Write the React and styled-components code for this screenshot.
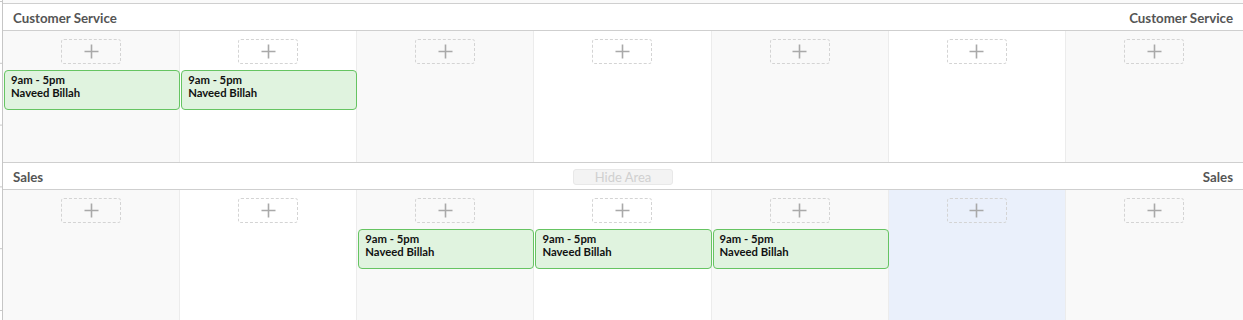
import styled, { createGlobalStyle } from 'styled-components'

const GlobalStyle = createGlobalStyle`
  html, body {
    margin: 0;
    padding: 0;
    background: #fff;
    font-family: Lato, 'Noto Sans', sans-serif;
  }
`

const Board = styled.div`
  display: flex;
  width: 1243px;
  height: 320px;
  overflow: hidden;
  background: #fff;
`

const Gutter = styled.div`
  width: 2px;
  flex: none;
  background-image: linear-gradient(to bottom, #c8c8c8 0 1px, transparent 1px);
  background-size: 2px 61.8px;
  background-position: 0 1px;
`

const Main = styled.div`
  flex: 1;
  border-left: 1px solid #c6c6c6;
  padding-top: 3px;
  background: linear-gradient(#fafafa, #fafafa) top / 100% 3px no-repeat;
`

const AreaHeader = styled.div`
  display: grid;
  grid-template-columns: 1fr auto 1fr;
  align-items: center;
  height: 26px;
  padding: 0 10px;
  border-top: 1px solid #cfcfcf;
  border-bottom: 1px solid #cfcfcf;
  background: #fff;
  font-size: 13.3px;
  font-weight: 700;
  color: #555;
`

const Title = styled.span`
  justify-self: ${(p) => (p.$end ? 'end' : 'start')};
  padding-top: 1px;
`

const HideButton = styled.button`
  width: 100px;
  height: 16px;
  padding: 0;
  border: 1px solid #e8e8e8;
  border-radius: 3px;
  background: #f3f3f3;
  color: #d0d0d0;
  font-family: Lato, 'Noto Sans', sans-serif;
  font-size: 13px;
  line-height: 14px;
  margin-top: 2px;
`

const Days = styled.div`
  display: grid;
  grid-template-columns: repeat(7, 1fr);
  height: ${(p) => p.$height}px;
`

const Cell = styled.div`
  display: flex;
  flex-direction: column;
  align-items: center;
  padding-top: 8px;
  border-right: 1px solid #ececec;
  background: ${(p) => (p.$today ? '#eaf0fb' : p.$shade ? '#f9f9f9' : '#fff')};
  &:last-child {
    border-right: 0;
  }
`

const AddButton = styled.div`
  width: 58px;
  height: 23px;
  flex: none;
  display: flex;
  align-items: center;
  justify-content: center;
  border: 1px dashed #d4d4d4;
  border-radius: 3px;
`

const Shift = styled.div`
  align-self: stretch;
  margin: 6px -1px 0 1px;
  padding: 2px 6px;
  box-sizing: border-box;
  height: 40px;
  border: 1px solid #66c462;
  border-radius: 4px;
  background: #e0f3df;
  color: #111;
  font-size: 11.3px;
  font-weight: 700;
  line-height: 13px;
`

const PlusIcon = () => (
  <svg width="15" height="15" viewBox="0 0 15 15">
    <path d="M7.5 0.5v14M0.5 7.5h14" stroke="#a9a9a9" strokeWidth="1.6" fill="none" />
  </svg>
)

const areas = [
  { name: 'Customer Service', shifts: [0, 1], height: 131, hide: false },
  { name: 'Sales', shifts: [2, 3, 4], height: 131, today: 5, hide: true },
]

export default function App() {
  return (
    <>
      <GlobalStyle />
      <Board>
        <Gutter />
        <Main>
          {areas.map((area) => (
            <section key={area.name}>
              <AreaHeader>
                <Title>{area.name}</Title>
                {area.hide ? <HideButton>Hide Area</HideButton> : <span />}
                <Title $end>{area.name}</Title>
              </AreaHeader>
              <Days $height={area.height}>
                {Array.from({ length: 7 }).map((_, i) => (
                  <Cell key={i} $shade={i % 2 === 0} $today={area.today === i}>
                    <AddButton>
                      <PlusIcon />
                    </AddButton>
                    {area.shifts.includes(i) && (
                      <Shift>
                        9am - 5pm
                        <br />
                        Naveed Billah
                      </Shift>
                    )}
                  </Cell>
                ))}
              </Days>
            </section>
          ))}
        </Main>
      </Board>
    </>
  )
}
